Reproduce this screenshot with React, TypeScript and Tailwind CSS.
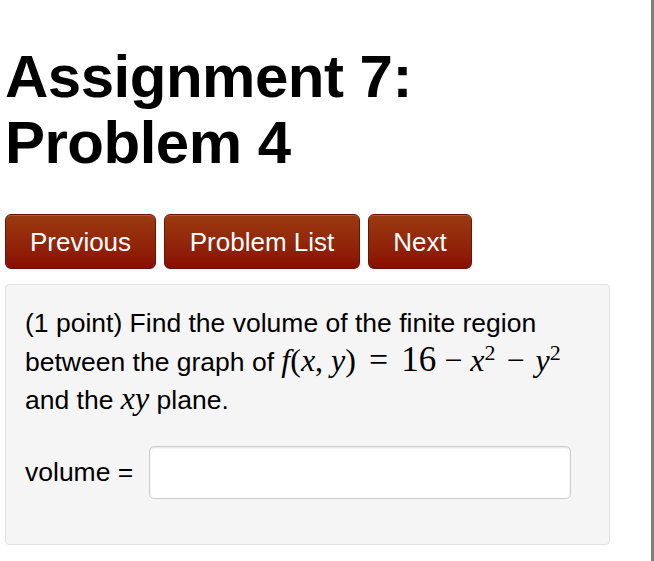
import React from "react";

const sans = { fontFamily: '"Liberation Sans", Arial, Helvetica, sans-serif' };
const serif = { fontFamily: '"Liberation Serif", "Times New Roman", serif' };

function NavButton({ label, width }: { label: string; width: string }) {
  return (
    <button
      className={`${width} h-[55px] rounded-[6px] border border-[#6e1204] bg-gradient-to-b from-[#9a3a10] to-[#8a0c04] text-[26px] leading-none text-white shadow-[inset_0_1px_0_rgba(255,255,255,0.18)]`}
    >
      {label}
    </button>
  );
}

// italic math identifier
function M({ children }: { children: React.ReactNode }) {
  return (
    <span className="text-[32px] italic leading-none" style={serif}>
      {children}
    </span>
  );
}

// upright math symbol
function R({ children, className = "" }: { children: React.ReactNode; className?: string }) {
  return (
    <span className={`text-[32px] leading-none ${className}`} style={serif}>
      {children}
    </span>
  );
}

function Sq() {
  return (
    <sup className="text-[22px] leading-none" style={serif}>
      2
    </sup>
  );
}

export default function App() {
  return (
    <div className="min-h-screen w-full border-r-[3px] border-[#7f7f7f] bg-white text-black" style={sans}>
      <div className="pl-[5px] pt-[44px]">
        <h1 className="text-[60px] font-bold leading-[66px] tracking-[-0.5px]">
          Assignment 7:
          <br />
          Problem 4
        </h1>

        <div className="mt-[38px] flex gap-[8px]">
          <NavButton label="Previous" width="w-[151px]" />
          <NavButton label="Problem List" width="w-[196px]" />
          <NavButton label="Next" width="w-[104px]" />
        </div>

        <div className="mt-[15px] h-[261px] w-[605px] rounded-[4px] border border-[#e3e3e3] bg-[#f5f5f5] px-[19px] pt-[19px]">
          <p className="text-[26.5px] leading-[38px]">
            (1 point) Find the volume of the finite region
            <br />
            between the graph of <M>f</M>
            <R>(</R>
            <M>x</M>
            <R>, </R>
            <M>y</M>
            <R>)</R>
            <R className="mx-[13px] text-[34px]">=</R>
            <R className="text-[35px]">16</R>
            <R className="mx-[8px]">−</R>
            <M>x</M>
            <Sq />
            <R className="mx-[11px]">−</R>
            <M>y</M>
            <Sq />
            <br />
            and the <M>xy</M> plane.
          </p>

          <div className="mt-[27px] flex items-center">
            <span className="text-[26.5px] leading-none">volume =</span>
            <input
              type="text"
              className="ml-[16px] h-[53px] w-[422px] rounded-[5px] border border-[#cccccc] bg-white shadow-[inset_0_1px_2px_rgba(0,0,0,0.12)] outline-none"
            />
          </div>
        </div>
      </div>
    </div>
  );
}
